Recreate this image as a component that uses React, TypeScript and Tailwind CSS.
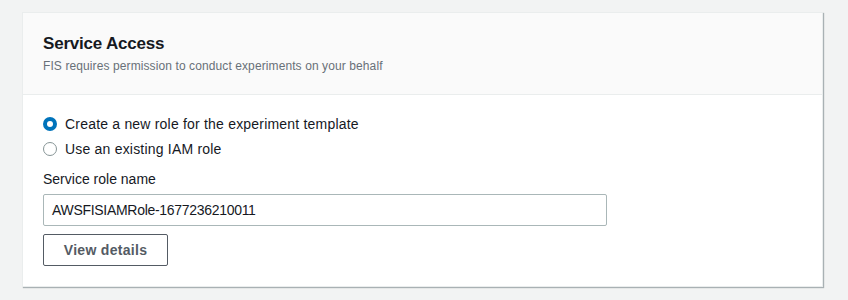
import React from "react";

export default function App() {
  const font = { fontFamily: '"Liberation Sans", Arial, sans-serif' };
  return (
    <div className="w-[848px] h-[300px] bg-[#f2f3f3] pt-[12px] pl-[22px]" style={font}>
      <div className="w-[801px] h-[275px] bg-white border border-[#eaeded] shadow-[1px_1px_1px_0_rgba(0,28,36,0.3)] flex flex-col">
        <div className="h-[82px] bg-[#fafafa] border-b border-[#eaeded] px-[20px] pt-[20px]">
          <div className="text-[17px] leading-[22px] font-bold tracking-[-0.2px] text-[#16191f]">Service Access</div>
          <div className="mt-[3px] text-[12px] leading-[16px] tracking-[0.1px] text-[#687078]">
            FIS requires permission to conduct experiments on your behalf
          </div>
        </div>
        <div className="px-[20px] pt-[18px] flex flex-col">
          <label className="flex items-center gap-[8px] h-[22px] text-[14px] tracking-[0.2px] text-[#16191f]">
            <span className="w-[14px] h-[14px] rounded-full bg-[#0073bb] flex items-center justify-center">
              <span className="w-[6px] h-[6px] rounded-full bg-white" />
            </span>
            Create a new role for the experiment template
          </label>
          <label className="mt-[3px] flex items-center gap-[8px] h-[22px] text-[14px] tracking-[0.2px] text-[#16191f]">
            <span className="w-[14px] h-[14px] rounded-full border-[1.5px] border-[#879596] bg-white" />
            Use an existing IAM role
          </label>
          <div className="mt-[9px] text-[14px] leading-[20px] text-[#16191f]">Service role name</div>
          <div className="mt-[5px] w-[564px] h-[32px] border border-[#aab7b8] rounded-[2px] flex items-center px-[8px] text-[14px] tracking-[-0.3px] text-[#16191f]">
            AWSFISIAMRole-1677236210011
          </div>
          <div className="mt-[8px]">
            <button className="w-[125px] h-[32px] border border-[#545b64] rounded-[2px] bg-white text-[14px] font-bold tracking-[0.3px] text-[#545b64]">
              View details
            </button>
          </div>
        </div>
      </div>
    </div>
  );
}
